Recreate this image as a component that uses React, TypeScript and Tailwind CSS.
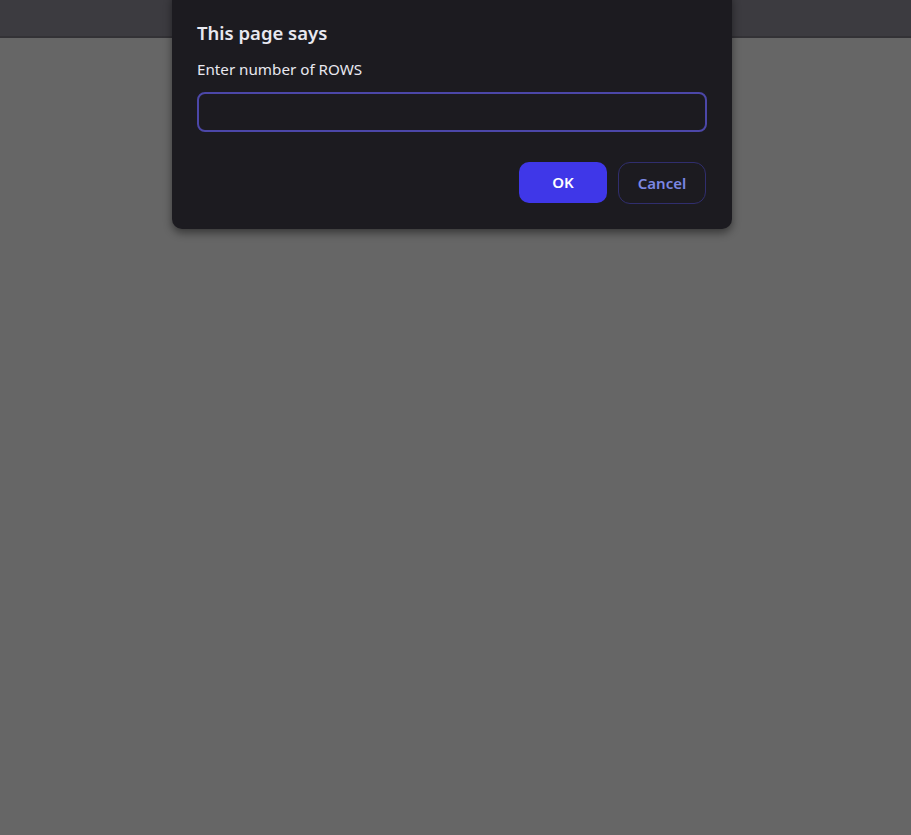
import React from "react";

export default function App() {
  return (
    <div className="relative w-[911px] h-[835px] bg-[#666666] overflow-hidden" style={{ fontFamily: '"Noto Sans", "Open Sans", sans-serif' }}>
      <div className="h-[38px] bg-[#3c3b40] border-b-2 border-[#333236]" />
      <div className="absolute left-[172px] top-[-10px] w-[560px] h-[239px] bg-[#1c1b20] rounded-[10px] shadow-[0_4px_8px_rgba(0,0,0,0.45)] pl-[25px] pr-[25px] pt-[29px]">
        <div className="text-[18.5px] leading-[28px] font-semibold text-[#e8e8f0]">This page says</div>
        <div className="mt-[12px] text-[15.2px] leading-[20px] text-[#e8e8f0]">Enter number of ROWS</div>
        <div className="mt-[13px] h-[40px] w-[510px] rounded-[8px] border-2 border-[#4c47a8] bg-[#1c1b20]" />
        <div className="mt-[30px] flex justify-end gap-[11px] pr-[1px]">
          <button className="w-[88px] h-[41px] rounded-[10px] bg-[#3f37e8] text-white text-[15px] font-semibold">OK</button>
          <button className="w-[88px] h-[42px] rounded-[12px] border border-[#302e6e] text-[#7b87e3] text-[15px] font-semibold">Cancel</button>
        </div>
      </div>
    </div>
  );
}
